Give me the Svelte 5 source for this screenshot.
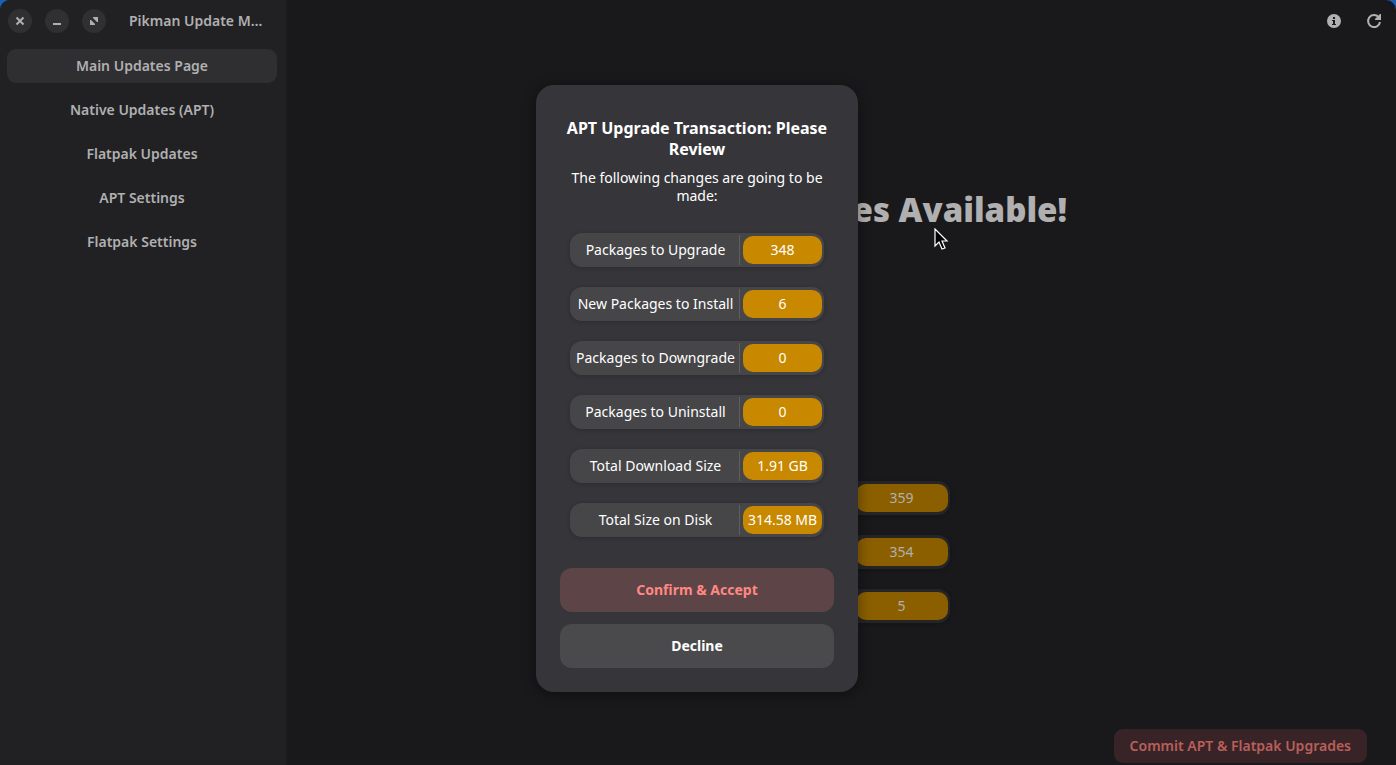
<script lang="ts">
  let pages = ['Main Updates Page', 'Native Updates (APT)', 'Flatpak Updates', 'APT Settings', 'Flatpak Settings'];
  let currentPage = $state('Main Updates Page');
  let dialogOpen = $state(true);

  // Counters on the main page
  const totals = [
    { label: 'Total Updates', value: '359' },
    { label: 'APT Updates', value: '354' },
    { label: 'Flatpak Updates', value: '5' },
  ];

  // Summary of the pending APT transaction
  const changes = [
    { label: 'Packages to Upgrade', value: '348' },
    { label: 'New Packages to Install', value: '6' },
    { label: 'Packages to Downgrade', value: '0' },
    { label: 'Packages to Uninstall', value: '0' },
    { label: 'Total Download Size', value: '1.91 GB' },
    { label: 'Total Size on Disk', value: '314.58 MB' },
  ];
</script>

<div class="window">
  <aside class="sidebar">
    <header class="titlebar">
      <button class="control" aria-label="Close">
        <svg width="16" height="16" viewBox="0 0 16 16"><path d="M4.5 4.5l7 7M11.5 4.5l-7 7" stroke="currentColor" stroke-width="2" /></svg>
      </button>
      <button class="control" aria-label="Minimize">
        <svg width="16" height="16" viewBox="0 0 16 16"><path d="M4 10h8v2H4z" fill="currentColor" /></svg>
      </button>
      <button class="control" aria-label="Maximize">
        <svg width="16" height="16" viewBox="0 0 16 16"><path d="M7 4h5v5h-1L7 5zM4 7h1l4 4v1H4z" fill="currentColor" /></svg>
      </button>
      <h1>Pikman Update M…</h1>
    </header>
    <nav>
      {#each pages as page}
        <button class="nav-item" class:active={page === currentPage} onclick={() => (currentPage = page)}>
          {page}
        </button>
      {/each}
    </nav>
  </aside>

  <main>
    <header class="toolbar">
      <button class="icon-button" aria-label="About">
        <svg width="16" height="16" viewBox="0 0 16 16">
          <path fill="currentColor" fill-rule="evenodd" d="M8 1a7 7 0 1 0 0 14A7 7 0 0 0 8 1zM7 4h2v2H7zM6 7h3v4h1v1H6v-1h1V8H6z" />
        </svg>
      </button>
      <button class="icon-button" aria-label="Refresh">
        <svg width="16" height="16" viewBox="0 0 16 16">
          <path d="M12.5 4A6 6 0 1 0 14 9" fill="none" stroke="currentColor" stroke-width="2" />
          <path d="M15 1v6H9v-1l5-5z" fill="currentColor" />
        </svg>
      </button>
    </header>
    <h2>System Updates Available!</h2>
    <div class="totals">
      {#each totals as row}
        <div class="row dim">
          <span class="label">{row.label}</span>
          <span class="value">{row.value}</span>
        </div>
      {/each}
    </div>
    <footer>
      <button class="commit" onclick={() => (dialogOpen = true)}>Commit APT &amp; Flatpak Upgrades</button>
    </footer>
  </main>

  {#if dialogOpen}
    <div class="backdrop">
      <div class="dialog" role="dialog" aria-modal="true" aria-labelledby="dialog-title">
        <h3 id="dialog-title">APT Upgrade Transaction: Please Review</h3>
        <p>The following changes are going to be made:</p>
        <div class="changes">
          {#each changes as row}
            <div class="row">
              <span class="label">{row.label}</span>
              <span class="value">{row.value}</span>
            </div>
          {/each}
        </div>
        <div class="actions">
          <button class="accept" onclick={() => (dialogOpen = false)}>Confirm &amp; Accept</button>
          <button class="decline" onclick={() => (dialogOpen = false)}>Decline</button>
        </div>
      </div>
    </div>
  {/if}

  <svg class="pointer" width="16" height="24" viewBox="0 0 16 24" aria-hidden="true">
    <path d="M1 1v17l4-4 3 7 3-1-3-7h5z" fill="#000" stroke="#fff" stroke-width="1.2" />
  </svg>
</div>

<style>
  :global(body) {
    background: #1a5fb4;
  }

  .window {
    position: relative;
    display: flex;
    min-height: 100vh;
    overflow: hidden;
    border-radius: 10px 10px 0 0;
    background: #19191b;
    color: #b0b0b1;
    font-family: 'Noto Sans', sans-serif;
    font-size: 14px;
    line-height: 18px;
  }

  button {
    border: none;
    padding: 0;
    font: inherit;
    font-weight: 600;
    color: inherit;
    cursor: pointer;
  }

  svg {
    display: block;
  }

  .sidebar {
    flex: none;
    box-sizing: border-box;
    width: 287px;
    padding: 0 9px 0 7px;
    background: #212123;
    border-right: 1px solid #1c1c1e;
  }

  .titlebar {
    display: flex;
    align-items: center;
    gap: 13px;
    height: 42px;
    padding-left: 1px;
  }

  .control {
    display: grid;
    place-items: center;
    flex: none;
    width: 24px;
    height: 24px;
    border-radius: 50%;
    background: #303032;
  }

  h1 {
    margin: 0 0 0 10px;
    font-size: 14px;
    font-weight: 600;
    white-space: nowrap;
  }

  nav {
    display: flex;
    flex-direction: column;
    gap: 10px;
    margin-top: 7px;
  }

  .nav-item {
    height: 34px;
    border-radius: 9px;
    background: transparent;
  }

  .nav-item.active {
    background: #2f2f31;
  }

  main {
    flex: 1;
    display: flex;
    flex-direction: column;
    align-items: center;
  }

  .toolbar {
    align-self: stretch;
    display: flex;
    justify-content: flex-end;
    gap: 6px;
    padding: 4px 5px;
  }

  .icon-button {
    display: grid;
    place-items: center;
    width: 34px;
    height: 34px;
    background: transparent;
  }

  h2 {
    margin: 144px 0 0;
    font-size: 33px;
    line-height: 48px;
    font-weight: 900;
  }

  .totals,
  .changes {
    display: flex;
    flex-direction: column;
    gap: 20px;
  }

  .totals {
    width: 216px;
    margin-top: 247px;
  }

  .row {
    display: flex;
    align-items: center;
    box-sizing: border-box;
    height: 34px;
    padding: 2px;
    border-radius: 12px;
    background: #464648;
    box-shadow: 0 1px 4px rgba(0, 0, 0, 0.2);
    text-align: center;
    white-space: nowrap;
  }

  .label {
    flex: 1;
    line-height: 30px;
    border-right: 1px solid #5e5e60;
  }

  .value {
    box-sizing: border-box;
    width: 79px;
    margin-left: 3px;
    line-height: 28px;
    border-radius: 10px;
    background: #c88800;
  }

  .row.dim {
    background: #252527;
  }

  .dim .label {
    border-color: #353537;
  }

  .dim .value {
    width: 92px;
    background: #8b5f00;
  }

  footer {
    align-self: stretch;
    display: flex;
    justify-content: flex-end;
    margin-top: auto;
    padding: 0 29px 2px;
  }

  .commit {
    height: 34px;
    padding: 0 16px;
    border-radius: 9px;
    background: #382427;
    color: #b95f5b;
  }

  .backdrop {
    position: absolute;
    inset: 0;
    display: grid;
    place-items: center;
    padding: 12px 2px 0 0;
  }

  .dialog {
    box-sizing: border-box;
    width: 322px;
    padding: 33px 24px 24px;
    border-radius: 18px;
    background: #36363a;
    box-shadow: 0 2px 14px rgba(0, 0, 0, 0.4);
    color: #fff;
    text-align: center;
  }

  h3 {
    margin: 0;
    font-size: 16px;
    line-height: 21px;
    font-weight: 700;
  }

  p {
    margin: 9px 8px 0;
  }

  .changes {
    margin: 28px 10px 0;
  }

  .actions {
    display: flex;
    flex-direction: column;
    gap: 12px;
    margin-top: 31px;
  }

  .actions button {
    height: 44px;
    border-radius: 12px;
    font-weight: 700;
  }

  .actions .accept {
    background: #5d4446;
    color: #ff8884;
  }

  .actions .decline {
    background: #4a4a4c;
  }

  .pointer {
    position: absolute;
    left: 934px;
    top: 228px;
  }
</style>
